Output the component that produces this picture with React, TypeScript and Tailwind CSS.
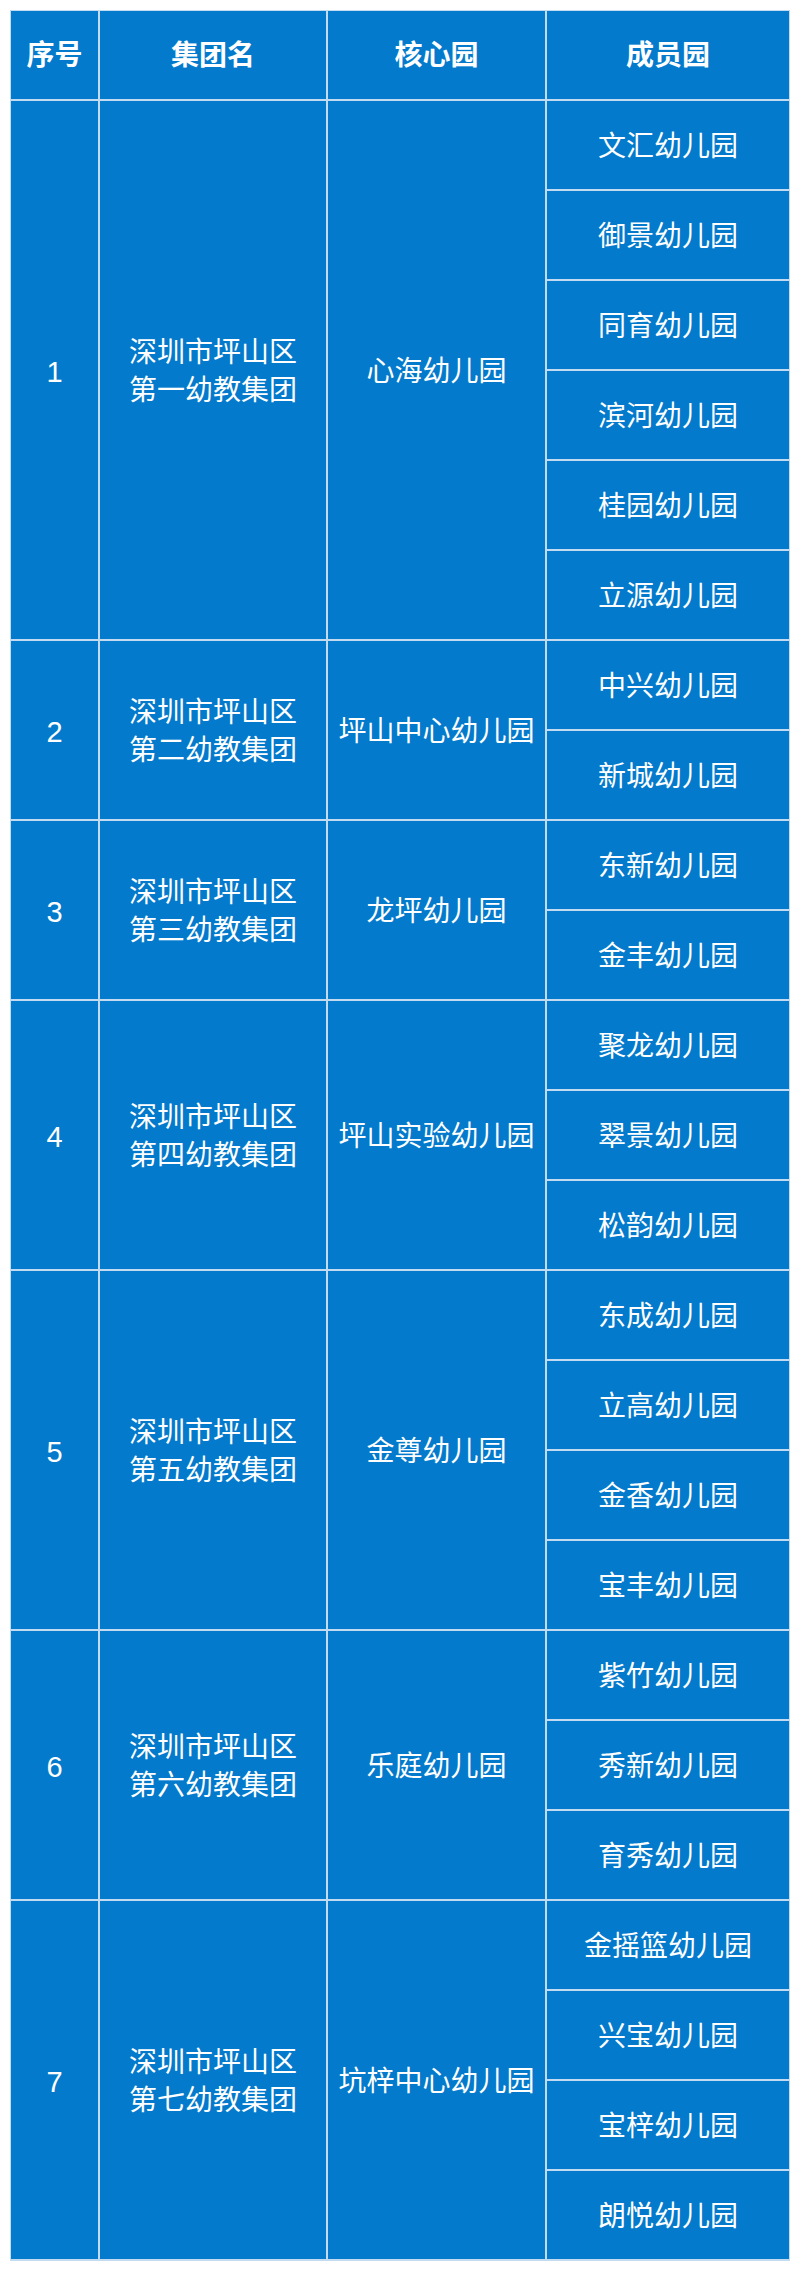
import React from "react";

type Group = { idx: string; name: [string, string]; core: string; members: string[] };

const groups: Group[] = [
  { idx: "1", name: ["深圳市坪山区", "第一幼教集团"], core: "心海幼儿园", members: ["文汇幼儿园", "御景幼儿园", "同育幼儿园", "滨河幼儿园", "桂园幼儿园", "立源幼儿园"] },
  { idx: "2", name: ["深圳市坪山区", "第二幼教集团"], core: "坪山中心幼儿园", members: ["中兴幼儿园", "新城幼儿园"] },
  { idx: "3", name: ["深圳市坪山区", "第三幼教集团"], core: "龙坪幼儿园", members: ["东新幼儿园", "金丰幼儿园"] },
  { idx: "4", name: ["深圳市坪山区", "第四幼教集团"], core: "坪山实验幼儿园", members: ["聚龙幼儿园", "翠景幼儿园", "松韵幼儿园"] },
  { idx: "5", name: ["深圳市坪山区", "第五幼教集团"], core: "金尊幼儿园", members: ["东成幼儿园", "立高幼儿园", "金香幼儿园", "宝丰幼儿园"] },
  { idx: "6", name: ["深圳市坪山区", "第六幼教集团"], core: "乐庭幼儿园", members: ["紫竹幼儿园", "秀新幼儿园", "育秀幼儿园"] },
  { idx: "7", name: ["深圳市坪山区", "第七幼教集团"], core: "坑梓中心幼儿园", members: ["金摇篮幼儿园", "兴宝幼儿园", "宝梓幼儿园", "朗悦幼儿园"] },
];

const spanClass: Record<number, string> = {
  2: "row-span-2",
  3: "row-span-3",
  4: "row-span-4",
  6: "row-span-6",
};

const cell = "bg-[#037acc] flex items-center justify-center text-center text-white";

export default function App() {
  return (
    <div
      className="w-[800px] bg-white px-[10px] pt-[10px] pb-[10px]"
      style={{ fontFamily: '"Liberation Sans", "Noto Sans CJK SC", sans-serif' }}
    >
      <div className="grid grid-cols-[87px_226px_217px_242px] auto-rows-[88px] gap-[2px] bg-[#c3dbf1] p-[1px] pb-[2px] text-[28px] leading-[38px]">
        <div className={`${cell} font-bold pt-[2px]`}>序号</div>
        <div className={`${cell} font-bold pt-[2px]`}>集团名</div>
        <div className={`${cell} font-bold pt-[2px]`}>核心园</div>
        <div className={`${cell} font-bold pt-[2px]`}>成员园</div>
        {groups.map((g) => {
          const span = spanClass[g.members.length];
          return (
            <React.Fragment key={g.idx}>
              <div className={`${cell} ${span} pt-[3px] text-[29px]`}>{g.idx}</div>
              <div className={`${cell} ${span} pt-[3px] flex-col`}>
                <span>{g.name[0]}</span>
                <span>{g.name[1]}</span>
              </div>
              <div className={`${cell} ${span} pt-[3px]`}>{g.core}</div>
              {g.members.map((m) => (
                <div key={m} className={`${cell} pt-[3px] col-start-4`}>{m}</div>
              ))}
            </React.Fragment>
          );
        })}
      </div>
    </div>
  );
}
